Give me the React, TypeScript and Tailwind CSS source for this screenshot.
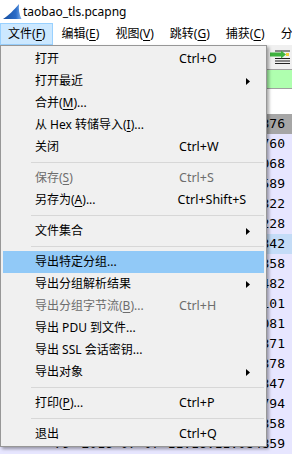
import React from 'react';

type Item =
  | { label: React.ReactNode; shortcut?: string; sub?: boolean; disabled?: boolean; active?: boolean }
  | 'sep';

const U = ({ c }: { c: string }) => <span className="underline underline-offset-[2px]">{c}</span>;

const items: Item[] = [
  { label: '打开', shortcut: 'Ctrl+O' },
  { label: '打开最近', sub: true },
  { label: <>合并(<U c="M" />)...</> },
  { label: <>从 Hex 转储导入(<U c="I" />)...</> },
  { label: '关闭', shortcut: 'Ctrl+W' },
  'sep',
  { label: <>保存(<U c="S" />)</>, shortcut: 'Ctrl+S', disabled: true },
  { label: <>另存为(<U c="A" />)...</>, shortcut: 'Ctrl+Shift+S' },
  'sep',
  { label: '文件集合', sub: true },
  'sep',
  { label: '导出特定分组...', active: true },
  { label: '导出分组解析结果', sub: true },
  { label: <>导出分组字节流(<U c="B" />)...</>, shortcut: 'Ctrl+H', disabled: true },
  { label: '导出 PDU 到文件...' },
  { label: '导出 SSL 会话密钥...' },
  { label: '导出对象', sub: true },
  'sep',
  { label: <>打印(<U c="P" />)...</>, shortcut: 'Ctrl+P' },
  'sep',
  { label: '退出', shortcut: 'Ctrl+Q' },
];

const menus = [
  ['文件', 'F'],
  ['编辑', 'E'],
  ['视图', 'V'],
  ['跳转', 'G'],
  ['捕获', 'C'],
  ['分析', 'A'],
];

const packets = [
  ['63', '10.912376'],
  ['64', '10.912760'],
  ['65', '10.913068'],
  ['66', '10.935589'],
  ['67', '10.936322'],
  ['68', '10.937228'],
  ['69', '10.951342'],
  ['70', '10.951358'],
  ['71', '10.952482'],
  ['72', '10.953101'],
  ['73', '10.974081'],
  ['74', '10.974371'],
  ['75', '10.974378'],
  ['76', '11.021347'],
  ['77', '11.021794'],
  ['78', '11.084358'],
  ['79', '11.084859'],
];

function Fin() {
  return (
    <svg width="20" height="18" viewBox="0 0 20 18">
      <defs>
        <linearGradient id="fin" x1="0" y1="0" x2="1" y2="0">
          <stop offset="0" stopColor="#174f9f" />
          <stop offset="0.7" stopColor="#2a6cc8" />
          <stop offset="1" stopColor="#7fb0ea" />
        </linearGradient>
      </defs>
      <path d="M1 16 C6 13 12 7 17 1 C16.5 6 17 11 19.5 16 Z" fill="url(#fin)" />
    </svg>
  );
}

function JumpIcon() {
  return (
    <svg width="22" height="14" viewBox="0 0 22 14">
      <path d="M6 1h15M6 8.5h15M6 11h15M6 13.5h15" stroke="#222" strokeWidth="1" />
      <rect x="1" y="2.5" width="13" height="4" fill="#3fb23f" />
      <path d="M12 0.5 L17 4.5 L12 8.5 Z" fill="#3fb23f" />
      <rect x="17" y="3" width="3" height="3" fill="#f2d03a" />
    </svg>
  );
}

export default function App() {
  return (
    <div
      className="relative w-[292px] h-[462px] overflow-hidden bg-white text-black text-[12px]"
      style={{ fontFamily: '"Noto Sans", "Noto Sans CJK SC", sans-serif' }}
    >
      {/* title bar */}
      <div className="h-[23px] flex items-center pl-[2px] gap-[1px]">
        <Fin />
        <span className="text-[12px]">taobao_tls.pcapng</span>
      </div>

      {/* menu bar */}
      <div className="h-[22px] flex whitespace-nowrap">
        {menus.map(([t, k], i) => (
          <div
            key={t}
            className={`flex items-center px-[7px] border ${i === 0 ? 'bg-[#cce8ff] border-[#99d1ff]' : 'border-transparent'}`}
          >
            {t}(<U c={k} />)
          </div>
        ))}
      </div>

      {/* window content behind the menu */}
      <div className="flex flex-col">
        <div className="h-[25px] bg-[#f0f0f0] flex items-center justify-end pr-[1px] border-b border-[#a0a0a0]">
          <JumpIcon />
        </div>
        <div className="h-[19px] bg-[#afffaf] border-b border-[#a0a0a0]" />
        <div className="h-[25px] bg-white" />
        {packets.map(([no, t], i) => (
          <div
            key={no}
            className={`h-[20px] flex items-center text-[13px] pr-[7px] ${
              i === 0 ? 'bg-[#a6a6a6]' : i === 6 ? 'bg-[#c4dcf7]' : 'bg-[#e7e6ff]'
            }`}
            style={{ fontFamily: '"DejaVu Sans Mono", monospace' }}
          >
            <span className="w-[70px] text-right">{no}</span>
            <span className="flex-1 text-right">2016-07-07 11:16:{t}</span>
          </div>
        ))}
        <div className="h-[10px] bg-white" />
      </div>

      {/* file menu */}
      <div className="absolute left-0 top-[45px] w-[267px] bg-[#f0f0f0] border border-[#979797] pt-[2px] pb-[1px] px-[2px] shadow-[2px_2px_3px_rgba(0,0,0,0.35)] whitespace-nowrap">
        {items.map((it, i) =>
          it === 'sep' ? (
            <div key={i} className="h-[9px] flex items-center pl-[28px]">
              <div className="h-px w-full bg-[#d7d7d7]" />
            </div>
          ) : (
            <div
              key={i}
              className={`h-[22px] flex items-center pl-[32px] ${it.active ? 'bg-[#91c9f7]' : ''} ${
                it.disabled ? 'text-[#6d6d6d]' : 'text-black'
              }`}
            >
              <span className="w-[144px]">{it.label}</span>
              <span className="flex-1 text-[12.5px]">{it.shortcut}</span>
              <span className="w-[18px] flex items-center">
                {it.sub && (
                  <svg width="4" height="7" viewBox="0 0 4 7">
                    <path d="M0 0 L4 3.5 L0 7 Z" fill="#000" />
                  </svg>
                )}
              </span>
            </div>
          )
        )}
      </div>
    </div>
  );
}
